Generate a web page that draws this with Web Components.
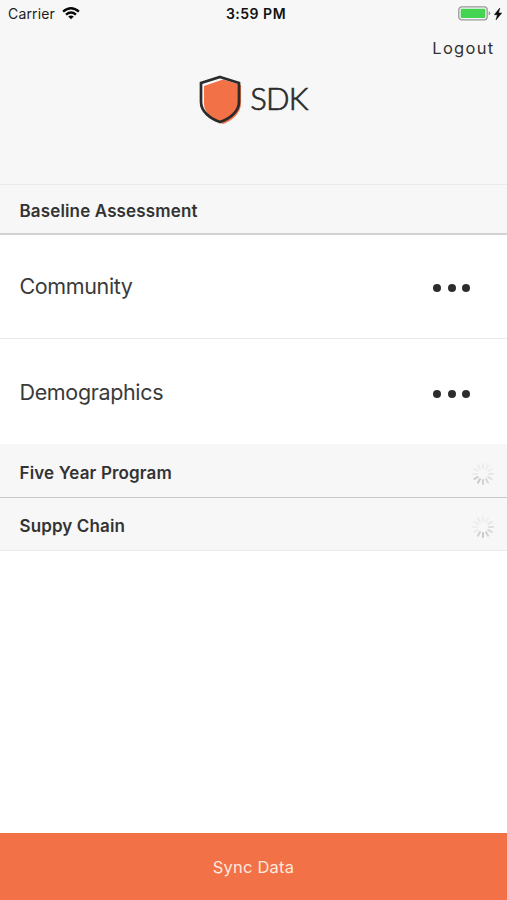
<!DOCTYPE html>
<html lang="en">
<head>
<meta charset="utf-8">
<title>SDK</title>
<style>
html,body{margin:0;height:100%;background:#fff;overflow:hidden}
body{font-family:Inter,"Liberation Sans",sans-serif;color:#333}
</style>
</head>
<body>
<app-screen>
  <status-bar slot="top" carrier="Carrier" time="3:59 PM"></status-bar>
  <app-header slot="top" action="Logout">SDK</app-header>
  <section-header class="first" style="--h:51px;--pad:3px;--line:#d2d2d2;--line-w:2px;--ls:.14px">Baseline Assessment</section-header>
  <list-row style="--h:104px;--ls:-.38px;--line:#ebebeb;--shift:0 0 1px;--dot:3px">Community</list-row>
  <list-row style="--h:105px;--ls:-.35px;--line:transparent;--shift:2px 0 0;--dot:5px">Demographics</list-row>
  <section-header style="--h:54px;--pad:4px;--ls:.15px"><span>Five Year Program</span><loading-spinner slot="end" phase="0"></loading-spinner></section-header>
  <section-header style="--h:53px;--pad:4px;--line:#ebebeb;--ls:.12px"><span>Suppy Chain</span><loading-spinner slot="end" phase="1"></loading-spinner></section-header>
  <sync-button slot="bottom">Sync Data</sync-button>
</app-screen>
<script>
const define = (name, render) => customElements.define(name, class extends HTMLElement {
  connectedCallback() {
    if (!this.shadowRoot) this.attachShadow({mode: 'open'}).innerHTML = render(this);
  }
});

define('app-screen', () => `
<style>
:host{display:flex;flex-direction:column;height:900px;width:507px;background:#fff}
main{flex:1}
header{height:184px;background:#f7f7f7;display:flex;flex-direction:column}
</style>
<header><slot name="top"></slot></header><main><slot></slot></main><slot name="bottom"></slot>`);

define('status-bar', el => `
<style>
:host{display:grid;grid-template-columns:1fr auto 1fr;height:27px;align-items:center;padding:0 5px 0 8px;color:#1c1c1c;font-size:14px}
div{display:flex;align-items:center}
.l{gap:7px;letter-spacing:.15px}
.r{justify-content:flex-end;gap:3px}
b{font-weight:600;font-size:14px;letter-spacing:.5px;color:#111;margin-left:2px}
svg{display:block}
</style>
<div class="l"><span>${el.getAttribute('carrier')}</span>
<svg width="18" height="14" viewBox="0 0 18 14" fill="none" stroke="#080808" stroke-width="2.4"><path d="M1.1 4.700Q9 -2.100 16.900 4.700"/><path d="M4 7.700Q9 3.400 14 7.700"/><path d="M9 12.200L6.200 9.500Q9 7.400 11.800 9.500Z" fill="#080808" stroke="none"/></svg></div>
<b>${el.getAttribute('time')}</b>
<div class="r"><svg width="33" height="15" viewBox="0 0 33 15"><rect x=".8" y=".8" width="28.4" height="13" rx="3" fill="#f7f7f7" stroke="#999" stroke-width="1.3"/><rect x="2.7" y="2.7" width="24.6" height="9.2" rx="1" fill="#43d551"/><path d="M30.7 5.200Q32.300 5.700 32.300 7.300T30.700 9.500Z" fill="#999"/></svg>
<svg width="8" height="12" viewBox="0 0 8 12"><path d="M5.800 0L.3 6.700H3.400L2 12L7.700 5H4.500Z" fill="#080808" stroke="#080808" stroke-width=".5"/></svg></div>`);

define('app-header', el => `
<style>
:host{display:flex;flex-direction:column;flex:1}
.a{align-self:flex-end;margin:10px 12.500px 0 0;font-size:16.5px;line-height:22px;letter-spacing:1.3px;color:#333}
.logo{align-self:center;display:flex;align-items:center;gap:8px;margin-top:16px;height:50px}
.n{font:300 31px/46px Lato,sans-serif;color:#2b2b2b;letter-spacing:-.7px;-webkit-text-stroke:.7px #2b2b2b;padding-bottom:5px}
svg{display:block}
</style>
<span class="a">${el.getAttribute('action')}</span>
<div class="logo"><svg width="43" height="50" viewBox="0 0 43 50"><path d="M24 4.5L42 10V28C42 38 33.5 45.500 24 49C14.500 45.500 5 38 5 29V11Z" fill="#f27146"/><path d="M21 2L40 8V27C40 36.500 31 43.700 21 47C11 43.700 2 36.500 2 27V8Z" fill="none" stroke="#2b2b2b" stroke-width="2.700"/></svg><span class="n"><slot></slot></span></div>`);

define('section-header', () => `
<style>
:host{display:flex;box-sizing:border-box;height:var(--h);padding:var(--pad,2px) 12.500px 0 19.500px;align-items:center;justify-content:space-between;background:#f7f7f7;border-bottom:var(--line-w,1px) solid var(--line,#c8c8c8);font-size:17px;font-weight:600;letter-spacing:var(--ls);color:#333}
:host(.first){border-top:1px solid #ebebeb}
</style>
<slot></slot><slot name="end"></slot>`);

define('list-row', () => `
<style>
:host{display:flex;box-sizing:border-box;height:var(--h);padding:0 37px 0 19.500px;align-items:center;justify-content:space-between;border-bottom:1px solid var(--line);font-size:21.500px;letter-spacing:var(--ls);color:#3a3a3a}
.t{padding:var(--shift)}
.d{display:flex;gap:6.500px;padding-top:var(--dot)}
i{width:8px;height:8px;border-radius:50%;background:#2d2d2d}
</style>
<span class="t"><slot></slot></span><span class="d"><i></i><i></i><i></i></span>`);

define('loading-spinner', el => {
  const p = +el.getAttribute('phase');
  let s = '';
  for (let k = 0; k < 12; k++) {
    const o = [.15,.12,.12,.2,.3,.4,.5,.6,.5,.15,.12,.12][(k + p) % 12];
    s += `<rect x="11" y="1" width="2" height="6" rx=".9" fill="#aaa" opacity="${o}" transform="rotate(${k * 30} 12 12)"/>`;
  }
  return `<style>:host{display:block;width:24px;height:24px;margin-top:2px}svg{display:block}</style><svg width="24" height="24" viewBox="0 0 24 24">${s}</svg>`;
});

define('sync-button', () => `
<style>
:host{display:flex;box-sizing:border-box;height:67px;align-items:center;justify-content:center;background:#f27146;color:#fde9df;font-size:16.500px;letter-spacing:.2px}
</style>
<slot></slot>`);
</script>
</body>
</html>
